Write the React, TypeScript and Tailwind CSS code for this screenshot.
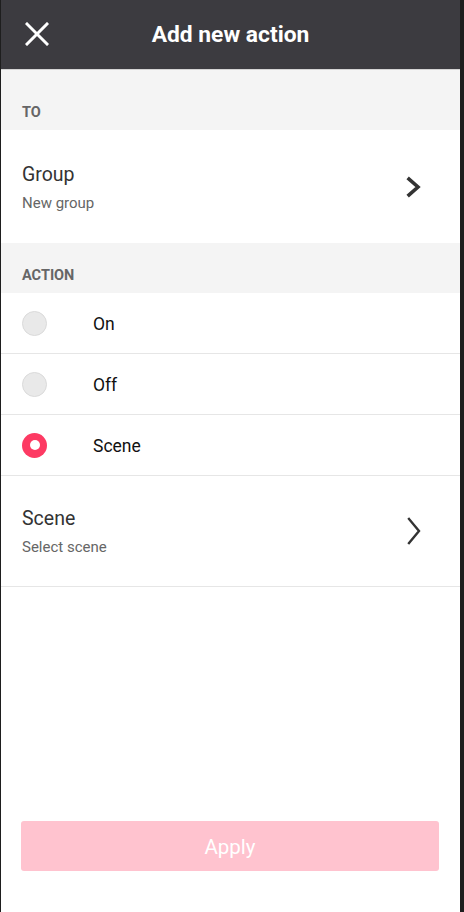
import React from "react";

const font = { fontFamily: "Roboto, 'Noto Sans', Arial, sans-serif" };

function Radio({ checked }: { checked?: boolean }) {
  if (checked) {
    return (
      <div className="w-[25px] h-[25px] rounded-full bg-[#fd3a63] flex items-center justify-center">
        <div className="w-[10px] h-[10px] rounded-full bg-white" />
      </div>
    );
  }
  return <div className="w-[25px] h-[25px] rounded-full bg-[#e9e9e9] border border-[#dadada]" />;
}

function OptionRow({ label, checked }: { label: string; checked?: boolean }) {
  return (
    <div className="h-[61px] flex items-center border-b border-[#e6e6e6] bg-white">
      <div className="w-[92px] pl-[21px] flex items-center">
        <Radio checked={checked} />
      </div>
      <span className="text-[17.5px] text-[#111] leading-[24px] pt-[2px]">{label}</span>
    </div>
  );
}

export default function App() {
  return (
    <div className="w-[464px] h-[912px] bg-[#1e1e1e] flex" style={font}>
      <div className="ml-[1px] w-[459px] h-full bg-white flex flex-col">
        <div className="h-[69px] bg-[#3c3b40] flex items-center relative shrink-0">
          <svg className="absolute left-[24px] top-[22px]" width="24" height="24" viewBox="0 0 24 24">
            <path d="M2 2 L22 22 M22 2 L2 22" stroke="white" strokeWidth="3" strokeLinecap="square" />
          </svg>
          <div className="w-full text-center text-white text-[22.8px] font-bold leading-[28px] pt-[1px]">Add new action</div>
        </div>
        <div className="h-px bg-[#d4d4d4]" />
        <div className="h-[60px] bg-[#f4f4f4] flex items-end px-[21px] pb-[7px]">
          <span className="text-[14.5px] font-bold text-[#666] leading-[20px]">TO</span>
        </div>
        <div className="h-[113px] flex items-center justify-between px-[21px]">
          <div className="flex flex-col gap-[6px] pt-[2px]">
            <span className="text-[19.5px] leading-[24px] text-[#333]">Group</span>
            <span className="text-[15px] leading-[20px] text-[#666]">New group</span>
          </div>
          <svg className="mr-[16px]" width="18" height="22" viewBox="0 0 18 22">
            <path d="M4 3 L13 11 L4 19" stroke="#333" strokeWidth="3.6" fill="none" strokeLinecap="square" />
          </svg>
        </div>
        <div className="h-[50px] bg-[#f4f4f4] flex items-end px-[21px] pb-[7px]">
          <span className="text-[14.5px] font-bold text-[#666] leading-[20px]">ACTION</span>
        </div>
        <OptionRow label="On" />
        <OptionRow label="Off" />
        <OptionRow label="Scene" checked />
        <div className="h-[111px] flex items-center justify-between px-[21px] border-b border-[#e6e6e6]">
          <div className="flex flex-col gap-[6px] pt-[2px]">
            <span className="text-[19.5px] leading-[24px] text-[#333]">Scene</span>
            <span className="text-[15px] leading-[20px] text-[#666]">Select scene</span>
          </div>
          <svg className="mr-[16px]" width="18" height="28" viewBox="0 0 18 28">
            <path d="M4 2 L14 14 L4 26" stroke="#333" strokeWidth="2.4" fill="none" strokeLinecap="square" />
          </svg>
        </div>
        <div className="flex-1" />
        <div className="px-[20px] mb-[41px]">
          <button className="w-[418px] h-[50px] rounded-[3px] bg-[#ffc3cf] text-white text-[20.5px] flex items-center justify-center pt-[2px]">
            Apply
          </button>
        </div>
      </div>
    </div>
  );
}
